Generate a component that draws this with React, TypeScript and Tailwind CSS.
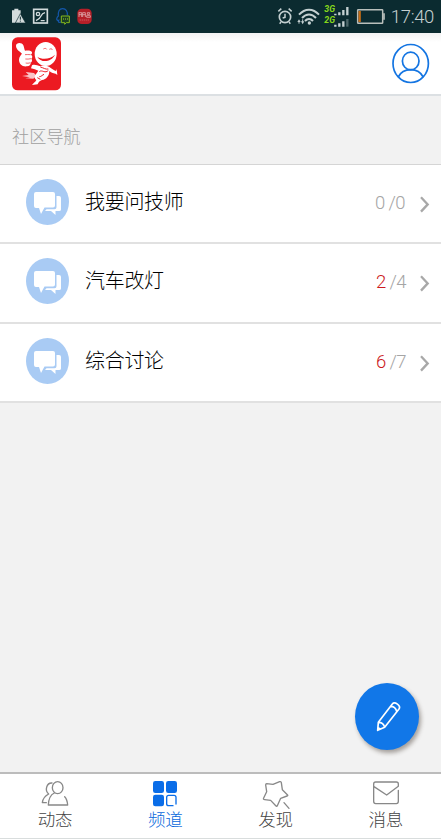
import type { ReactNode } from "react";

interface Channel {
  name: string;
  today: number;
  total: number;
}

const CHANNELS: Channel[] = [
  { name: "我要问技师", today: 0, total: 0 },
  { name: "汽车改灯", today: 2, total: 4 },
  { name: "综合讨论", today: 6, total: 7 },
];

function StatusBar() {
  return (
    <div className="h-[33px] shrink-0 bg-[#0b2b30] flex items-center justify-between pl-[11px] pr-[7px]">
      <svg width="82" height="33" viewBox="33 0 246 99" fill="none">
        <path d="M36 31h7v-5h12v5h7v13L48 68H36z" fill="#d3dbdc" />
        <path d="M61 41L77 69H46z" fill="#d3dbdc" stroke="#0b2b30" strokeWidth="2" />
        <path d="M61 50v9M61 62v3" stroke="#0b2b30" strokeWidth="3" />
        <rect x="101" y="28" width="41" height="41" stroke="#d3dbdc" strokeWidth="5" />
        <circle cx="114" cy="42" r="5" stroke="#d3dbdc" strokeWidth="4" />
        <path d="M108 62c8-3 12-7 15-14s6-9 12-10M122 62h12" stroke="#d3dbdc" strokeWidth="4" />
        <path d="M183 66c-7 3-10-1-7-5-9 1-6-9-1-13-1-14 3-22 13-22s15 8 14 20" stroke="#1458ad" strokeWidth="3.5" />
        <path d="M184 48h24v20h-9l-5 5v-5h-10z" fill="#1a3f22" stroke="#86b81d" strokeWidth="3" />
        <path d="M189 57h3M195 57h3M201 57h3" stroke="#a4d32c" strokeWidth="3" />
        <rect x="232" y="26" width="43" height="46" rx="13" fill="#b51f28" />
        <path d="M236 38h9v13M237 44h8M237 38v13M248 38h8v13M248 44h8M248 38v13M262 38h7v5h-7zM260 47h11v5h-11z" stroke="#e9c7c8" strokeWidth="2" />
        <path d="M239 60h29" stroke="#db777b" strokeWidth="2" strokeDasharray="4 2" />
      </svg>
      <div className="flex items-center">
        <svg width="110" height="33" viewBox="21 0 330 99" fill="none" className="mr-[4px]">
          <circle cx="45" cy="51" r="17" stroke="#c4d0d1" strokeWidth="5" />
          <path d="M45 41v11l-7 2M25 34l9-8M65 34l-9-8M33 66l-4 5M57 66l4 5" stroke="#c4d0d1" strokeWidth="4.5" />
          <path d="M87 44c18-20 42-20 60 0M96 54c13-14 29-14 42 0M105 63c7-8 17-8 24 0" stroke="#c4d0d1" strokeWidth="6" />
          <circle cx="118" cy="69" r="5" fill="#c4d0d1" />
          <path d="M82 66l5-8 5 8zM93 64l5 9 5-9z" fill="#c4d0d1" />
          <path d="M87 65v6M98 58v8" stroke="#c4d0d1" strokeWidth="3" />
          <text x="163" y="35" fill="#87d81b" fontSize="27" fontWeight="700" fontStyle="italic" fontFamily="Roboto, sans-serif" textLength="32" lengthAdjust="spacingAndGlyphs">3G</text>
          <text x="163" y="69" fill="#87d81b" fontSize="27" fontWeight="700" fontStyle="italic" fontFamily="Roboto, sans-serif" textLength="32" lengthAdjust="spacingAndGlyphs">2G</text>
          <path d="M196 46v-5M208 46V37M220 46V30M232 46V21M196 80v-6M208 80V70M220 80V64" stroke="#c4d0d1" strokeWidth="7" />
          <path d="M232 80V57" stroke="#4d686b" strokeWidth="7" />
          <rect x="263" y="29" width="75" height="41" rx="2" stroke="#b9bfbb" strokeWidth="4.5" />
          <path d="M342 40v19" stroke="#b9bfbb" strokeWidth="5" />
          <path d="M269 33v33" stroke="#c66d16" strokeWidth="7" />
        </svg>
        <span className="font-['Roboto',sans-serif] text-[18.5px] leading-none tracking-[-0.35px] text-[#c5d0d1] font-light mt-px">17:40</span>
      </div>
    </div>
  );
}

function Logo() {
  return (
    <svg width="50" height="54" viewBox="36 20 150 162" fill="none" className="mt-[4px]">
      <rect x="36" y="21" width="147" height="159" rx="17" fill="#ec1a22" />
      <path d="M48 46c0-10 18-11 22-1 2 5 3 12 5 16 9-1 20-1 21 5 1 5-3 6-3 7 5 3 5 9 1 12 4 4 2 10-2 12 1 6-4 10-11 11-15 2-24-8-24-20 0-9 6-14 9-18-6-7-18-12-18-24z" fill="#fff" />
      <path d="M75 73c5 0 11-1 17 0M76 86c5 1 12 0 17-1M77 98c5 1 9 1 14-1" stroke="#ec1a22" strokeWidth="2" />
      <ellipse cx="137" cy="71" rx="33" ry="36" fill="#fff" />
      <path d="M130 56c5-3 9-2 10 1M148 57c5-3 9-1 9 2" stroke="#ec1a22" strokeWidth="2" />
      <path d="M112 79c10 19 41 18 53-6-13 13-38 17-53 6z" fill="#ec1a22" />
      <path d="M96 105c8-4 16 1 25 3 8-4 20-4 27 2 8 5 12 9 20 12l2-6 2 18-5-4c-9-1-14-4-19-8 0 15-9 25-22 27-7 2-10 6-13 13l-17 2c4-6 10-8 13-15-5-3-7-10-3-15l9-13c-7-3-14-5-22-7z" fill="#fff" />
      <path d="M121 110c9 2 15 8 24 6M118 124c8-7 18 7 27-4M118 139c6 0 9-5 14-7M112 142l9 5" stroke="#ec1a22" strokeWidth="3" />
      <path d="M77 125l25 3 7 8-9 9-24-1 14-3-24-4 20-3z" fill="#fff" opacity="0.75" />
    </svg>
  );
}

function TopBar() {
  return (
    <header className="h-[63px] shrink-0 bg-white bg-linear-to-b from-[#f2f2f2] to-white to-[9px] border-b-2 border-[#dce0e3] flex items-start justify-between pl-3 pr-[11px]">
      <Logo />
      <svg width="38" height="41" viewBox="0 0 38 41" fill="none" stroke="#1475e2" strokeWidth="1.7" className="mt-[10px]">
        <ellipse cx="18.7" cy="20.5" rx="17.7" ry="19" />
        <ellipse cx="18.7" cy="18" rx="8.3" ry="8.8" />
        <path d="M6.2 34c2.5-5 7-7.4 12.5-7.4S28.7 29 31.2 34" />
      </svg>
    </header>
  );
}

function ChatBadge() {
  return (
    <svg width="43" height="46" viewBox="0 0 43 46" className="ml-[26px] mt-[14px] shrink-0">
      <ellipse cx="21.5" cy="23" rx="21.5" ry="23" fill="#a9cbf4" />
      <path d="M30.500 17H33q2 0 2 2v11.500q0 1.500-2 1.500h-3.500v4L25 32h-6l1.500-1.700h8q2 0 2-2z" fill="#fff" />
      <path d="M10 13h17q2 0 2 2v11.500q0 2-2 2h-8.500L15 35l-2-6h-3q-2 0-2-2V15q0-2 2-2z" fill="#fff" />
    </svg>
  );
}

function ChannelRow({ channel }: { channel: Channel }) {
  return (
    <li className="flex items-start flex-1 border-b-2 border-[#e1e1e1]">
      <ChatBadge />
      <span className="ml-[16px] mt-[21px] text-[20px] tracking-[-0.3px] leading-[30px] text-black font-light">{channel.name}</span>
      <span className={`ml-auto mt-[23px] font-['Roboto',sans-serif] text-[18.5px] tracking-[-0.6px] leading-[30px] font-light text-[#a5a5a5] whitespace-pre ${channel.today > 0 ? "mr-[14px]" : "mr-[15px]"}`}>
        <span className={channel.today > 0 ? "text-[#cc1a1c]" : ""}>{channel.today}</span> /{channel.total}
      </span>
      <svg width="10" height="17" viewBox="0 0 10 17" fill="none" className="mt-[31px] mr-[11px]">
        <path d="M1 1.300l6.700 7.100L1 15.600" stroke="#a8a8a8" strokeWidth="2.300" />
      </svg>
    </li>
  );
}

function ComposeButton() {
  return (
    <button className="fixed left-[355px] top-[683px] w-[64px] h-[67px] rounded-[50%] bg-[#1177e8] shadow-[2px_3px_4px_rgba(70,60,50,0.45)]">
      <svg width="64" height="67" viewBox="0 0 192 201" fill="none" stroke="#fff" strokeWidth="5" strokeLinejoin="round">
        <path d="M68 142l2-24 42-55c7-9 27 5 20 15l-43 55zM70 118c9 0 17 6 19 15M106 70c9 0 17 6 19 15M68 142l1-8 7 4z" />
      </svg>
    </button>
  );
}

function Tab({ label, active, children }: { label: string; active?: boolean; children: ReactNode }) {
  return (
    <div className={`flex-1 flex flex-col items-center ${active ? "text-[#0a69dc]" : "text-[#444]"}`}>
      <svg width="30" height="30" viewBox="0 0 90 90" fill="none" stroke="#888" strokeWidth="4" strokeLinecap="round" strokeLinejoin="round" className="mt-[5px]">
        {children}
      </svg>
      <span className="-mt-px text-[17.5px] leading-[22px] font-light">{label}</span>
    </div>
  );
}

function TabBar() {
  return (
    <nav className="h-[67px] shrink-0 bg-white border-t-2 border-t-[#bcbcbc] border-b border-b-[#d9dddd] flex">
      <Tab label="动态">
        <ellipse cx="53" cy="26" rx="16" ry="18" />
        <path d="M43 42c-11 5-17 16-18 36h58c-1-12-3-19-9-25M36 12c-16-1-23 22-10 33C13 52 8 59 7 71h12" />
      </Tab>
      <Tab label="频道" active>
        <g fill="#0a6de8" stroke="none">
          <rect x="9" y="6" width="33" height="36" rx="7" />
          <rect x="48" y="6" width="33" height="36" rx="7" />
          <rect x="9" y="47" width="33" height="35" rx="7" />
        </g>
        <path d="M69 80H56q-6 0-6-6V55q0-6 6-6h16q6 0 6 6v20" stroke="#0a6de8" />
      </Tab>
      <Tab label="发现">
        <path d="M17 14l19 2 20-8q4-1 5 3l3 21 15 15q3 3-1 4l-19 7-10 22q-2 4-4 1L29 64l-18-2q-5 0-3-5l9-19-3-20q0-4 3-4zM69 71l15 17" />
      </Tab>
      <Tab label="消息">
        <path d="M82 34v33q0 7-6 7H14q-6 0-6-7V15q0-6 6-6h62q6 0 6 6v7L47 48 9 23" />
      </Tab>
    </nav>
  );
}

export default function App() {
  return (
    <div className="w-full h-[839px] flex flex-col bg-[#f2f2f2] overflow-hidden font-['Noto_Sans_CJK_SC',sans-serif]">
      <StatusBar />
      <TopBar />
      <main className="flex-1">
        <h2 className="h-[68px] pl-3 pt-[25px] text-[17.2px] leading-[30px] font-light text-[#a0a0a0]">社区导航</h2>
        <ul className="h-[239px] flex flex-col bg-white border-t border-[#d5d5d5]">
          {CHANNELS.map((channel) => (
            <ChannelRow key={channel.name} channel={channel} />
          ))}
        </ul>
      </main>
      <TabBar />
      <ComposeButton />
    </div>
  );
}
